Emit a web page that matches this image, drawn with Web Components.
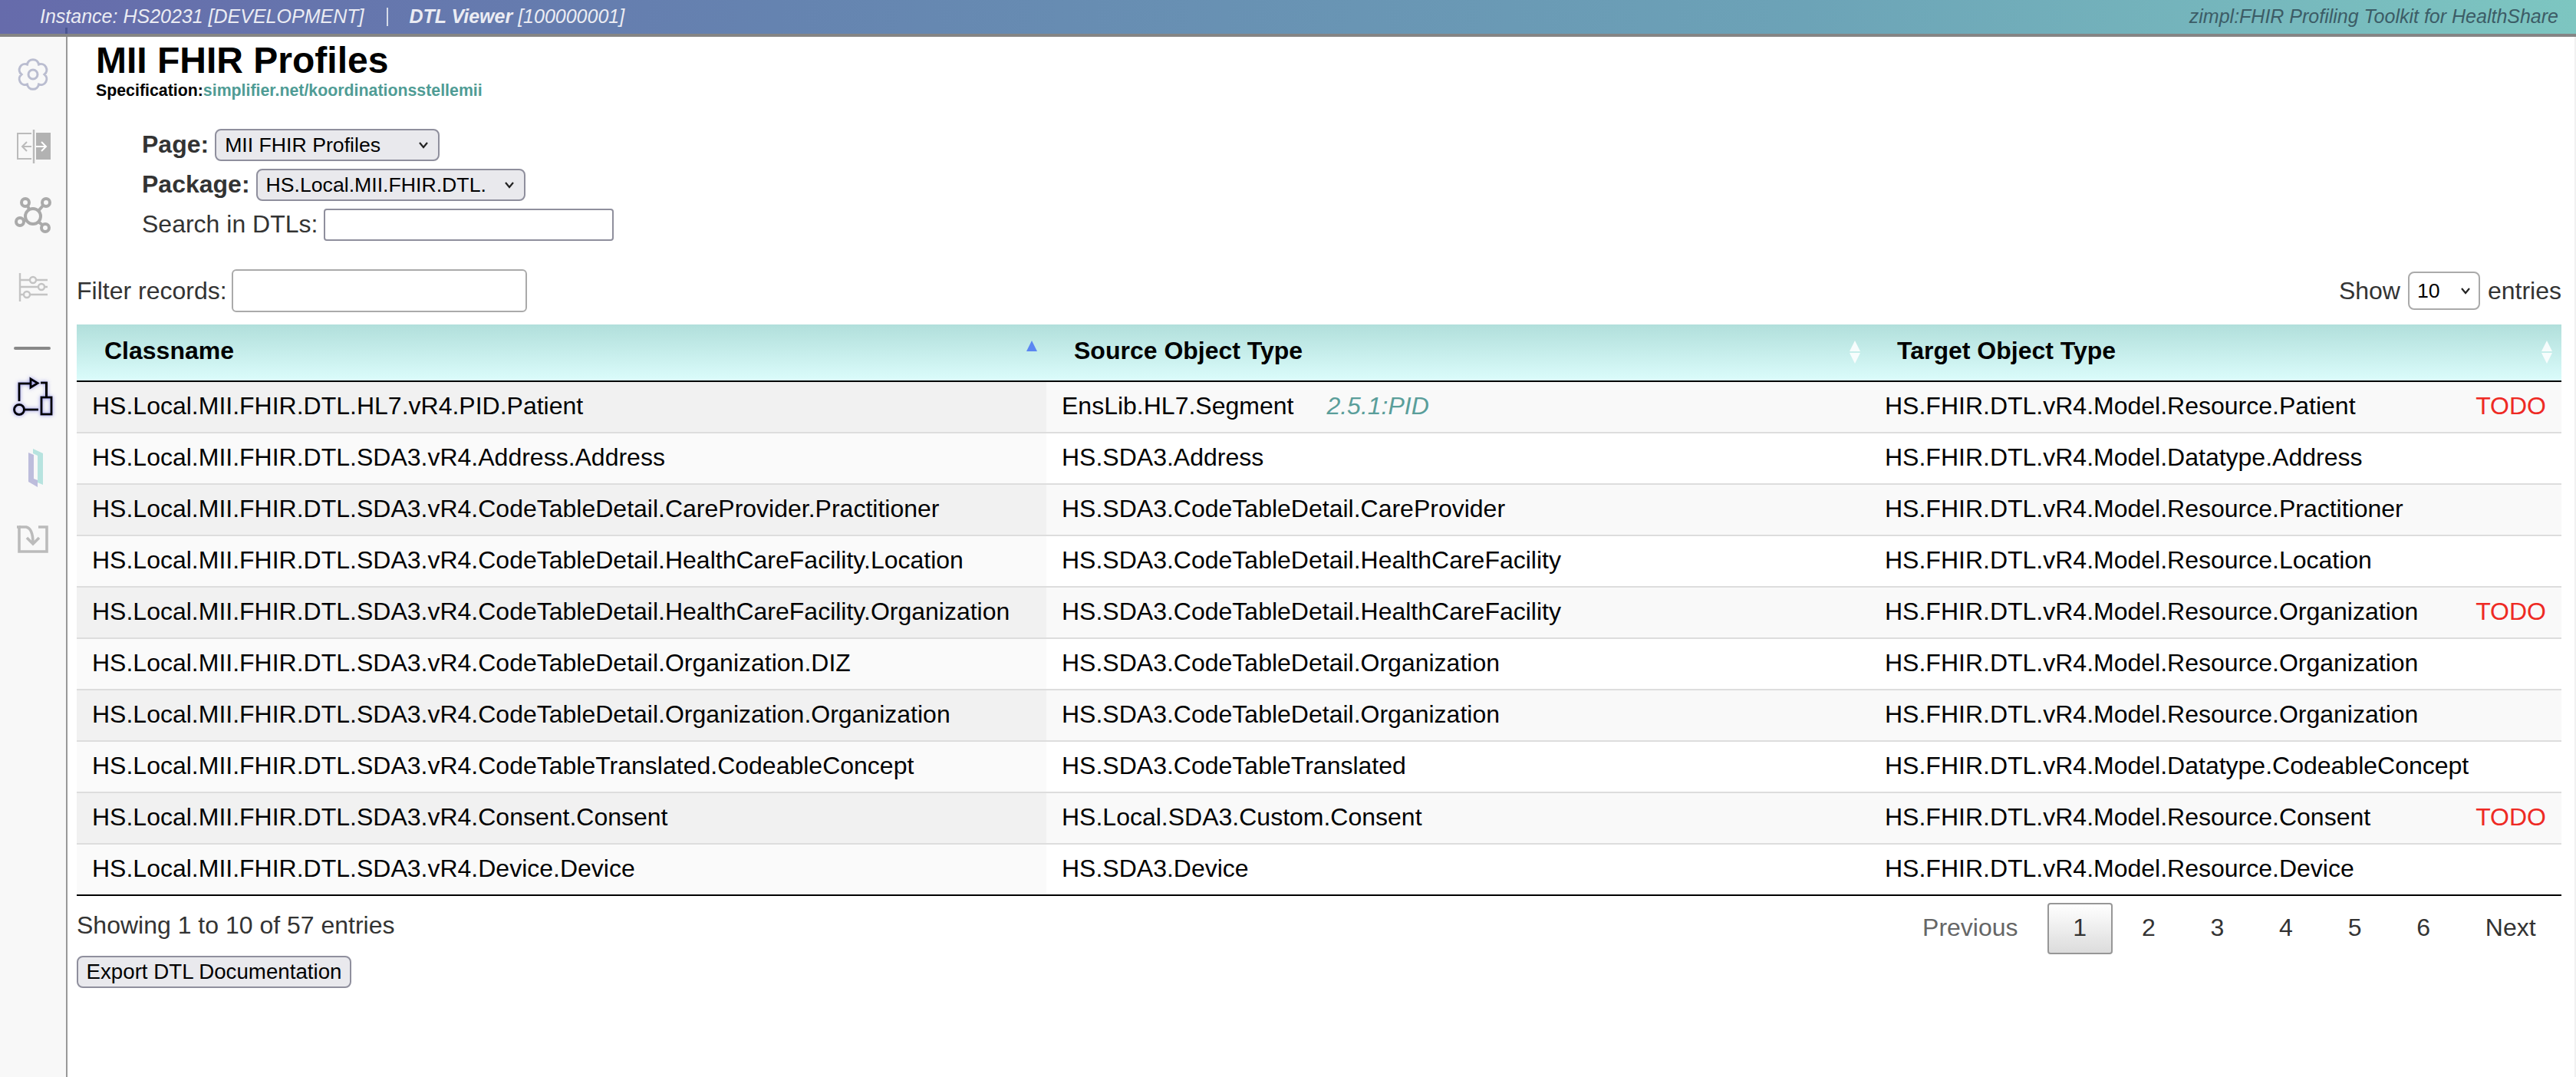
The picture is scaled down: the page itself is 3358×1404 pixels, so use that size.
<!DOCTYPE html>
<html>
<head>
<meta charset="utf-8">
<title>DTL Viewer</title>
<style>
    html, body { margin: 0; height: 100%; background: #fff; }
    body { font-family: "Liberation Sans", Arial, sans-serif; font-size: 32px; overflow: hidden; }
</style>
</head>
<body>

<template id="appShell">
    <style>
        :host { display: flex; flex-direction: column; height: 1404px; }
        .body { flex: 1; display: flex; min-height: 0; }
    </style>
    <slot name="bar"></slot>
    <div class="body">
        <slot name="side"></slot>
        <slot></slot>
    </div>
</template>

<template id="topBar">
    <style>
        :host {
            display: flex; position: relative; justify-content: space-between; align-items: center;
            box-sizing: border-box; height: 48px; padding: 0 23px 1px 52px;
            font-size: 25px; font-style: italic; color: #ebecf3;
            background: linear-gradient(90deg, #666bab 0%, #6583b0 30%, #6ca3b7 70%, #7dc6c1 100%);
            border-bottom: 4px solid; border-image: linear-gradient(#a9a9a9 50%, #858585 50%) 1;
        }
        .left { display: flex; align-items: center; }
        .sep { width: 2px; height: 24px; background: #d5dbe8; margin: 0 27px 0 30px; }
        b { font-weight: bold; }
        .right { color: #3c5c66; }
        .tick { position: absolute; left: 85px; top: 36px; width: 3px; height: 8px; background: #4a5592; }
    </style>
    <div class="left">
        <span><slot name="instance"></slot></span>
        <span class="sep"></span>
        <span><slot name="viewer"></slot></span>
    </div>
    <span class="right"><slot name="brand"></slot></span>
    <span class="tick"></span>
</template>

<template id="sideBar">
    <style>
        :host { display: block; flex: none; width: 86px; background: #f8f8f8; border-right: 2px solid #999; }
    </style>
    <slot></slot>
</template>

<template id="sideIcon">
    <style>
        :host { display: block; }
        ::slotted(svg) { display: block; }
    </style>
    <slot></slot>
</template>

<template id="mainPane">
    <style>
        :host {
            display: block; flex: 1; min-width: 0; box-sizing: border-box;
            padding: 6px 17px 0 12px; border-right: 2px solid #f1f1f1; color: #333;
        }
    </style>
    <slot></slot>
</template>

<template id="pageHead">
    <style>
        :host { display: block; padding-left: 25px; color: #000; }
        h1 { margin: 0; font-size: 48px; line-height: 50px; font-weight: bold; }
        .spec { font-size: 21.33px; line-height: 24px; font-weight: bold; margin-top: 2px; }
        .spec ::slotted(a) { color: #4f9c95; text-decoration: none; }
    </style>
    <h1><slot name="title"></slot></h1>
    <div class="spec">Specification:<slot name="link"></slot></div>
</template>

<template id="pageForm">
    <style>
        :host { display: flex; flex-direction: column; gap: 10px; padding: 38px 0 0 85px; }
    </style>
    <slot></slot>
</template>

<template id="formRow">
    <style>
        :host { display: flex; align-items: center; height: 42px; gap: 8px; font-size: 32px; color: #333; }
        :host([strong]) { font-weight: bold; }
        ::slotted([slot="label"]) { position: relative; top: -1px; }
    </style>
    <slot name="label"></slot>
    <slot></slot>
</template>

<template id="pickBox">
    <style>
        :host {
            display: flex; align-items: center; justify-content: space-between; box-sizing: border-box;
            height: 42px; padding: 0 12px 0 11px; font-size: 26.67px; font-weight: normal; color: #000;
            background: #e9e9ed; border: 2px solid #8f8f9d; border-radius: 8px;
        }
        :host([plain]) { height: 50px; background: #fff; border-color: #aaa; padding: 0 10px; }
        svg { display: block; flex: none; }
    </style>
    <slot></slot>
    <svg width="14" height="10" viewBox="0 0 14 10"><path d="M2 2l5 6 5-6" fill="none" stroke="#222" stroke-width="2.2"/></svg>
</template>

<template id="textBox">
    <style>
        :host { display: block; box-sizing: border-box; background: #fff; border: 2px solid #8f8f9d; border-radius: 4px; height: 42px; }
        :host([soft]) { border-color: #aaa; border-radius: 6px; height: 56px; }
    </style>
</template>

<template id="tableTools">
    <style>
        :host { display: flex; justify-content: space-between; align-items: center; height: 56px; margin: 37px 0 16px; color: #333; }
        .side { display: flex; align-items: center; gap: 10px; }
        .left { gap: 6px; }
    </style>
    <div class="side left"><slot name="left"></slot></div>
    <div class="side"><slot name="right"></slot></div>
</template>

<template id="dtlTable">
    <style>
        :host { display: block; border-bottom: 2px solid #000; color: #000; }
    </style>
    <slot name="head"></slot>
    <slot></slot>
</template>

<template id="tableHead">
    <style>
        :host {
            display: grid; grid-template-columns: 1264px 1073px 902px; height: 75px; box-sizing: border-box;
            border-bottom: 2px solid #000; background: linear-gradient(#b1dfdb, #dbfcfb);
        }
    </style>
    <slot></slot>
</template>

<template id="headCell">
    <style>
        :host {
            display: flex; align-items: center; justify-content: space-between; box-sizing: border-box;
            padding: 0 11px 0 36px; font-weight: bold; color: #000;
        }
        span { position: relative; top: -2px; }
        svg { display: block; position: relative; top: -1px; }
    </style>
    <span><slot></slot></span>
    <svg width="16" height="30" viewBox="0 0 16 30">
        <path class="up" d="M8 0l7 14H1z"/>
        <path class="down" d="M1 16h14l-7 14z" fill="#fff" opacity=".85"/>
    </svg>
</template>

<template id="dtlRow">
    <style>
        :host {
            display: grid; grid-template-columns: 1264px 1073px 902px; height: 67px; box-sizing: border-box;
            border-top: 2px solid #ddd; background: #fff; font-size: 32px; color: #000;
        }
        :host(:nth-child(even)) { background: #f9f9f9; }
        :host(:nth-child(2)) { border-top: 0; height: 65px; }
        .cell { display: flex; align-items: center; padding: 0 20px 3px; min-width: 0; white-space: nowrap; }
        .first { background: #fafafa; }
        :host(:nth-child(even)) .first { background: #f1f1f1; }
        .target { justify-content: space-between; }
        ::slotted([slot="note"]) { font-style: italic; color: #5a9e9a; margin-left: 43px; }
        ::slotted([slot="flag"]) { color: #ee2a24; }
    </style>
    <div class="cell first"><slot name="name"></slot></div>
    <div class="cell"><slot name="source"></slot><slot name="note"></slot></div>
    <div class="cell target"><slot name="target"></slot><slot name="flag"></slot></div>
</template>

<template id="tableFoot">
    <style>
        :host { display: flex; justify-content: space-between; align-items: flex-start; padding-top: 9px; height: 76px; box-sizing: border-box; color: #333; }
        .info { line-height: 37px; padding-top: 11px; }
    </style>
    <div class="info"><slot name="info"></slot></div>
    <slot></slot>
</template>

<template id="pagerBar">
    <style>
        :host { display: flex; gap: 5px; }
    </style>
    <slot></slot>
</template>

<template id="pagerBtn">
    <style>
        :host {
            display: block; box-sizing: border-box; height: 67px; line-height: 60px; padding: 0 31.4px;
            border: 2px solid transparent; border-radius: 4px; color: #333;
        }
        :host([off]) { color: #666; }
        :host([current]) { border-color: #979797; background: linear-gradient(#fff, #dcdcdc); }
    </style>
    <slot></slot>
</template>

<template id="exportBtn">
    <style>
        :host {
            display: block; width: 358px; height: 42px; box-sizing: border-box; margin-top: 2px;
            background: #e9e9ed; border: 2px solid #8f8f9d; border-radius: 8px;
            font-size: 27.7px; line-height: 37px; text-align: center; color: #000;
        }
    </style>
    <slot></slot>
</template>

<app-shell>
    <top-bar slot="bar">
        <span slot="instance">Instance: HS20231 [DEVELOPMENT]</span>
        <span slot="viewer"><b>DTL Viewer</b> [100000001]</span>
        <span slot="brand">zimpl:FHIR Profiling Toolkit for HealthShare</span>
    </top-bar>

    <side-bar slot="side">
        <side-icon>
            <svg width="86" height="97" viewBox="0 48 86 97">
                <g transform="translate(43 97)" fill="none" stroke="#babdd0" stroke-width="3">
                    <path d="M-7.5-13A7.6 7.6 0 0 1 7.5-13 A7.6 7.6 0 0 1 15 0 A7.6 7.6 0 0 1 7.5 13 A7.6 7.6 0 0 1 -7.5 13 A7.6 7.6 0 0 1 -15 0 A7.6 7.6 0 0 1 -7.5-13Z"/>
                    <circle r="6"/>
                </g>
            </svg>
        </side-icon>
        <side-icon>
            <svg width="86" height="91" viewBox="0 145 86 91">
                <path d="M41 174H23V207H41" fill="none" stroke="#bbb" stroke-width="2"/>
                <path d="M47 173H66V208H47Z" fill="#b2b2b2"/>
                <path d="M44 169V213" stroke="#bbb" stroke-width="2.4"/>
                <path d="M41 191H30M35 185L29 191L35 197" fill="none" stroke="#bbb" stroke-width="2"/>
                <path d="M47 191H59M54 185L60 191L54 197" fill="none" stroke="#fff" stroke-width="2"/>
            </svg>
        </side-icon>
        <side-icon>
            <svg width="86" height="92" viewBox="0 236 86 92">
                <g fill="none" stroke="#aaa" stroke-width="4">
                    <circle cx="43" cy="282" r="10"/>
                    <circle cx="33" cy="264" r="5"/>
                    <circle cx="60" cy="264" r="5"/>
                    <circle cx="26" cy="289" r="5"/>
                    <circle cx="59" cy="297" r="5"/>
                    <path d="M36 268L38 273M56 268L50 275M31 288L34 286M55 293L50 289"/>
                </g>
            </svg>
        </side-icon>
        <side-icon>
            <svg width="86" height="92" viewBox="0 328 86 92">
                <g fill="none" stroke="#c4c4c4" stroke-width="2.4">
                    <path d="M26 356V393M26 365H39M47 365H62M26 374H50M58 374H62M26 384H31M39 384H62"/>
                    <circle cx="43" cy="365" r="4"/>
                    <circle cx="54" cy="374" r="4"/>
                    <circle cx="35" cy="384" r="4"/>
                </g>
            </svg>
        </side-icon>
        <side-icon>
            <svg width="86" height="60" viewBox="0 420 86 60">
                <path d="M20 454H64" stroke="#888" stroke-width="4" stroke-linecap="round"/>
            </svg>
        </side-icon>
        <side-icon>
            <svg width="86" height="82" viewBox="0 480 86 82">
                <defs><filter id="glow" x="-40%" y="-40%" width="180%" height="180%"><feDropShadow dx="0" dy="0" stdDeviation="2.6" flood-color="#6a6ad8" flood-opacity=".75"/></filter></defs>
                <g fill="none" stroke="#000" stroke-width="3" filter="url(#glow)">
                    <path d="M25 523V500H39"/>
                    <path d="M40 494L49 499.500L40 505Z"/>
                    <path d="M53 499H60.500V518"/>
                    <rect x="54" y="518" width="13" height="22"/>
                    <circle cx="25" cy="534" r="6.500"/>
                    <path d="M32 534H50"/>
                </g>
            </svg>
        </side-icon>
        <side-icon>
            <svg width="86" height="98" viewBox="0 562 86 98">
                <path d="M37 590L44 593V624L49 626V635L37 628Z" fill="#bdbddc"/>
                <path d="M43 585L56 591V632L49 629V594L43 591Z" fill="#b7e3df"/>
            </svg>
        </side-icon>
        <side-icon>
            <svg width="86" height="90" viewBox="0 660 86 90">
                <g fill="none" stroke="#bbb" stroke-width="3.600">
                    <path d="M22 687H25V719H61V687H50"/>
                    <path d="M25 687H34Q43 689 43 708"/>
                    <path d="M35 701L43 709L51 701"/>
                </g>
            </svg>
        </side-icon>
    </side-bar>

    <main-pane>
        <page-head>
            <span slot="title">MII FHIR Profiles</span>
            <a slot="link">simplifier.net/koordinationsstellemii</a>
        </page-head>

        <page-form>
            <form-row strong><span slot="label">Page:</span><pick-box style="width:293px">MII FHIR Profiles</pick-box></form-row>
            <form-row strong><span slot="label">Package:</span><pick-box style="width:351px">HS.Local.MII.FHIR.DTL.</pick-box></form-row>
            <form-row><span slot="label">Search in DTLs:</span><text-box style="width:378px"></text-box></form-row>
        </page-form>

        <table-tools>
            <span slot="left">Filter records:</span>
            <text-box slot="left" soft style="width:385px"></text-box>
            <span slot="right">Show</span>
            <pick-box slot="right" plain style="width:94px">10</pick-box>
            <span slot="right">entries</span>
        </table-tools>

        <dtl-table>
            <table-head slot="head">
                <head-cell sort="asc">Classname</head-cell>
                <head-cell>Source Object Type</head-cell>
                <head-cell>Target Object Type</head-cell>
            </table-head>
            <dtl-row><span slot="name">HS.Local.MII.FHIR.DTL.HL7.vR4.PID.Patient</span><span slot="source">EnsLib.HL7.Segment</span><span slot="note">2.5.1:PID</span><span slot="target">HS.FHIR.DTL.vR4.Model.Resource.Patient</span><span slot="flag">TODO</span></dtl-row>
            <dtl-row><span slot="name">HS.Local.MII.FHIR.DTL.SDA3.vR4.Address.Address</span><span slot="source">HS.SDA3.Address</span><span slot="target">HS.FHIR.DTL.vR4.Model.Datatype.Address</span></dtl-row>
            <dtl-row><span slot="name">HS.Local.MII.FHIR.DTL.SDA3.vR4.CodeTableDetail.CareProvider.Practitioner</span><span slot="source">HS.SDA3.CodeTableDetail.CareProvider</span><span slot="target">HS.FHIR.DTL.vR4.Model.Resource.Practitioner</span></dtl-row>
            <dtl-row><span slot="name">HS.Local.MII.FHIR.DTL.SDA3.vR4.CodeTableDetail.HealthCareFacility.Location</span><span slot="source">HS.SDA3.CodeTableDetail.HealthCareFacility</span><span slot="target">HS.FHIR.DTL.vR4.Model.Resource.Location</span></dtl-row>
            <dtl-row><span slot="name">HS.Local.MII.FHIR.DTL.SDA3.vR4.CodeTableDetail.HealthCareFacility.Organization</span><span slot="source">HS.SDA3.CodeTableDetail.HealthCareFacility</span><span slot="target">HS.FHIR.DTL.vR4.Model.Resource.Organization</span><span slot="flag">TODO</span></dtl-row>
            <dtl-row><span slot="name">HS.Local.MII.FHIR.DTL.SDA3.vR4.CodeTableDetail.Organization.DIZ</span><span slot="source">HS.SDA3.CodeTableDetail.Organization</span><span slot="target">HS.FHIR.DTL.vR4.Model.Resource.Organization</span></dtl-row>
            <dtl-row><span slot="name">HS.Local.MII.FHIR.DTL.SDA3.vR4.CodeTableDetail.Organization.Organization</span><span slot="source">HS.SDA3.CodeTableDetail.Organization</span><span slot="target">HS.FHIR.DTL.vR4.Model.Resource.Organization</span></dtl-row>
            <dtl-row><span slot="name">HS.Local.MII.FHIR.DTL.SDA3.vR4.CodeTableTranslated.CodeableConcept</span><span slot="source">HS.SDA3.CodeTableTranslated</span><span slot="target">HS.FHIR.DTL.vR4.Model.Datatype.CodeableConcept</span></dtl-row>
            <dtl-row><span slot="name">HS.Local.MII.FHIR.DTL.SDA3.vR4.Consent.Consent</span><span slot="source">HS.Local.SDA3.Custom.Consent</span><span slot="target">HS.FHIR.DTL.vR4.Model.Resource.Consent</span><span slot="flag">TODO</span></dtl-row>
            <dtl-row><span slot="name">HS.Local.MII.FHIR.DTL.SDA3.vR4.Device.Device</span><span slot="source">HS.SDA3.Device</span><span slot="target">HS.FHIR.DTL.vR4.Model.Resource.Device</span></dtl-row>
        </dtl-table>

        <table-foot>
            <span slot="info">Showing 1 to 10 of 57 entries</span>
            <pager-bar>
                <pager-btn off>Previous</pager-btn>
                <pager-btn current>1</pager-btn>
                <pager-btn>2</pager-btn>
                <pager-btn>3</pager-btn>
                <pager-btn>4</pager-btn>
                <pager-btn>5</pager-btn>
                <pager-btn>6</pager-btn>
                <pager-btn>Next</pager-btn>
            </pager-bar>
        </table-foot>

        <export-btn>Export DTL Documentation</export-btn>
    </main-pane>
</app-shell>

<script>
    // every element just clones its template into an open shadow root
    class TemplateElement extends HTMLElement {
        constructor(){
            super()
            const template = document.querySelector('#' + this.constructor.templateId)
            this.attachShadow({ mode: 'open' }).appendChild(template.content.cloneNode(true))
        }
    }

    class HeadCell extends TemplateElement {
        static get templateId(){ return 'headCell' }

        connectedCallback(){
            const up = this.shadowRoot.querySelector('.up')
            const down = this.shadowRoot.querySelector('.down')
            if(this.getAttribute('sort') === 'asc'){
                up.setAttribute('fill', '#5b86f2')
                down.remove()
            } else {
                up.setAttribute('fill', '#fff')
                up.setAttribute('opacity', '.85')
            }
        }
    }

    const plainElements = {
        'app-shell': 'appShell',
        'top-bar': 'topBar',
        'side-bar': 'sideBar',
        'side-icon': 'sideIcon',
        'main-pane': 'mainPane',
        'page-head': 'pageHead',
        'page-form': 'pageForm',
        'form-row': 'formRow',
        'pick-box': 'pickBox',
        'text-box': 'textBox',
        'table-tools': 'tableTools',
        'dtl-table': 'dtlTable',
        'table-head': 'tableHead',
        'dtl-row': 'dtlRow',
        'table-foot': 'tableFoot',
        'pager-bar': 'pagerBar',
        'pager-btn': 'pagerBtn',
        'export-btn': 'exportBtn'
    }

    for(const name in plainElements){
        customElements.define(name, class extends TemplateElement {
            static get templateId(){ return plainElements[name] }
        })
    }
    customElements.define('head-cell', HeadCell)
</script>
</body>
</html>
